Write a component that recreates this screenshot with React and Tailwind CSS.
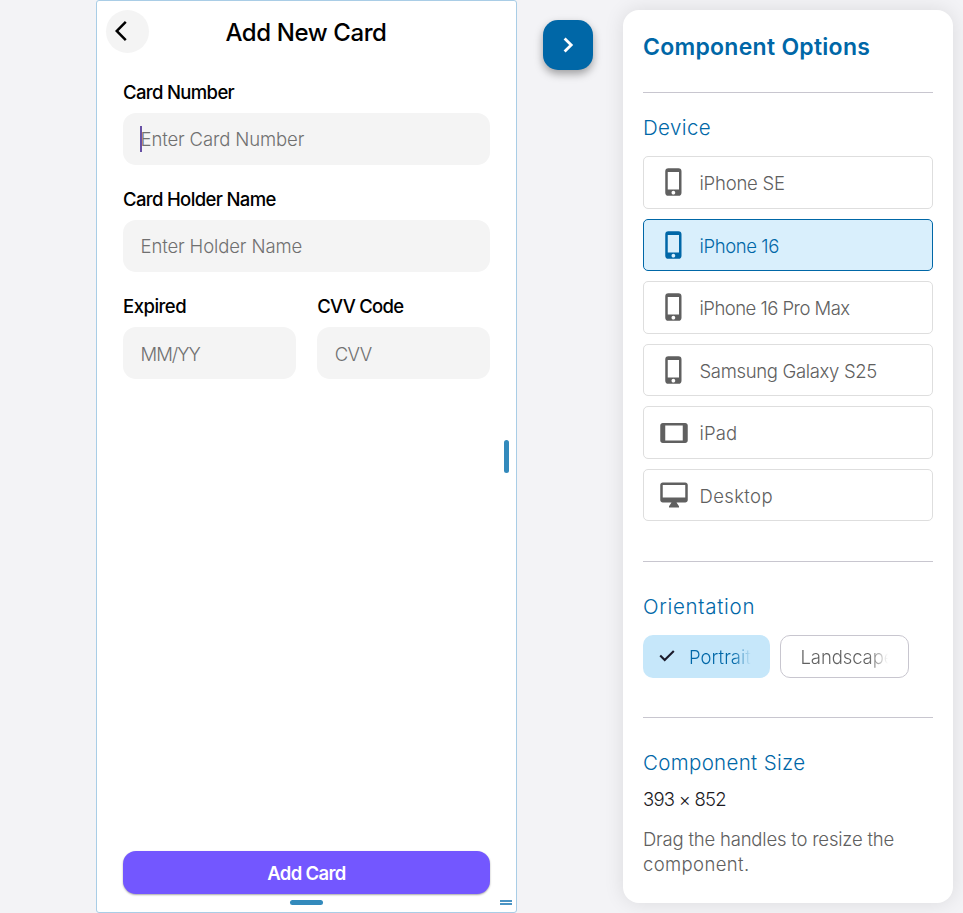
import { MdPhoneIphone, MdTablet } from "react-icons/md";

function DesktopIcon({ className }) {
  return (
    <svg viewBox="0 0 24 24" fill="currentColor" className={className}>
      <path fillRule="evenodd" d="M21 2H3c-1.1 0-2 .9-2 2v12c0 1.1.9 2 2 2h7l-2 3v1h8v-1l-2-3h7c1.1 0 2-.9 2-2V4c0-1.1-.9-2-2-2zm0 12H3V4h18v10z" />
    </svg>
  );
}

const devices = [
  { name: "iPhone SE", icon: MdPhoneIphone, track: "tracking-[-0.22px]" },
  { name: "iPhone 16", icon: MdPhoneIphone, track: "tracking-[-0.4px]", active: true },
  { name: "iPhone 16 Pro Max", icon: MdPhoneIphone, track: "tracking-[-0.52px]" },
  { name: "Samsung Galaxy S25", icon: MdPhoneIphone, track: "tracking-[-0.33px]" },
  { name: "iPad", icon: MdTablet, track: "tracking-[0.1px]" },
  { name: "Desktop", icon: DesktopIcon, track: "tracking-[0.38px]" },
];

function Field({ label, labelTrack, placeholder, track, focused, textTop = "pt-[2px]" }) {
  return (
    <div className="min-w-0 flex-1">
      <div className={`flex h-[42px] items-center pt-0.5 text-[18.5px] font-medium text-black ${labelTrack}`}>{label}</div>
      <div className={`relative flex h-[51.5px] items-center rounded-[13px] bg-[#f4f4f4] pl-[17.5px] text-[18.5px] font-[350] text-[#707070] ${textTop}`}>
        {focused && <span className="absolute top-[13px] left-[17px] h-[26px] w-[2px] bg-[#6750a4]" />}
        <span className={`whitespace-nowrap ${track}`}>{placeholder}</span>
      </div>
    </div>
  );
}

function Phone() {
  return (
    <div className="relative ml-24 flex h-[913px] w-[421px] shrink-0 flex-col rounded-[3px] border border-[#a9cde6] bg-white">
      <div className="flex h-[61px] items-center pl-[9px]">
        <div className="flex size-[43px] shrink-0 items-center rounded-full bg-[#f4f4f4] pb-px pl-[8.5px]">
          <svg viewBox="0 0 12 20" className="h-5 w-3">
            <path d="M11.67 1.77L9.9 0 0 10l9.9 10 1.77-1.77L3.54 10z" fill="#000" />
          </svg>
        </div>
        <h1 className="w-[314px] pt-[2px] text-center text-2xl font-medium tracking-[-0.4px] text-black">Add New Card</h1>
      </div>
      <div className="flex flex-col gap-[13.5px] px-[26px] pt-[9px]">
        <Field label="Card Number" labelTrack="tracking-[-0.65px]" placeholder="Enter Card Number" track="tracking-[-0.12px]" focused />
        <Field label="Card Holder Name" labelTrack="tracking-[-0.65px]" placeholder="Enter Holder Name" track="tracking-[-0.12px]" />
        <div className="flex gap-[21.5px]">
          <Field label="Expired" labelTrack="tracking-[-0.5px]" placeholder="MM/YY" track="tracking-[-1px]" textTop="pt-[4px]" />
          <Field label="CVV Code" labelTrack="tracking-[-0.75px]" placeholder="CVV" track="tracking-[-0.65px]" textTop="pt-[4px]" />
        </div>
      </div>
      <div className="mt-auto px-[26px] pb-[18px]">
        <button className="block h-[43px] w-full rounded-[13px] bg-[#7357ff] pt-[3px] text-[18.5px] font-semibold tracking-[-0.65px] text-white shadow-[0_1px_2px_rgba(0,0,0,0.35)]">Add Card</button>
      </div>
      <span className="absolute top-[439px] left-[407px] h-[33px] w-[5px] rounded-full bg-[#338abc]" />
      <span className="absolute top-[899px] left-[193px] h-[5px] w-[33px] rounded-full bg-[#338abc]" />
      <span className="absolute top-[899px] left-[403px] h-[5px] w-[12px] border-y-2 border-[#4b94c4]" />
    </div>
  );
}

function Heading({ children, className }) {
  return <h3 className={`flex items-center text-[20.5px] font-[350] text-[#0067a7] ${className}`}>{children}</h3>;
}

function Panel() {
  return (
    <aside className="mt-2.5 ml-[30px] h-[893px] w-[330px] shrink-0 rounded-2xl bg-white px-5 shadow-[0_0_20px_rgba(0,0,0,0.1)]">
      <h2 className="flex h-[83px] items-center border-b border-[#c8c6cf] pb-[7px] text-[23px] font-[560] tracking-[0.27px] whitespace-nowrap text-[#0067a7]">Component Options</h2>
      <Heading className="h-[63px] pt-[8px] tracking-[0.38px]">Device</Heading>
      <div className="flex flex-col gap-[10.1px]">
        {devices.map(({ name, icon: Icon, track, active }) => (
          <div key={name} className={`flex h-[52.5px] items-center gap-[10.5px] rounded-[5px] border pl-[15px] text-[18.5px] font-[350] ${active ? "border-[#0067a7] bg-[#d9effc] text-[#0067a7]" : "border-[#dedede] bg-white text-[#606060]"}`}>
            <Icon className="size-[30px] shrink-0" />
            <span className={`${active ? "pt-[4px]" : "pt-[3px]"} ${track}`}>{name}</span>
          </div>
        ))}
      </div>
      <div className="mt-10 h-px bg-[#c8c6cf]" />
      <Heading className="h-[73px] pt-[17px] tracking-[0.7px]">Orientation</Heading>
      <div className="flex gap-2.5 text-[18.5px] font-[350]">
        <div className="flex h-[42.5px] w-[126.5px] items-center rounded-[10px] bg-[#c6e7fa] pl-[14px] text-[#0067a7]">
          <svg viewBox="0 0 20 20" className="mr-[12px] mb-px size-5 shrink-0" fill="none" stroke="#1c1b2b" strokeWidth="2.1">
            <path d="M3.2 9.6l4.5 4.5L16.8 5" />
          </svg>
          <span className="w-[62px] overflow-hidden bg-linear-to-r from-[#0067a7] from-72% to-transparent bg-clip-text pt-[2px] tracking-[0.05px] text-transparent">Portrait</span>
        </div>
        <div className="flex h-[42.5px] w-[129px] items-center rounded-[10px] border-[1.5px] border-[#c8c6cf] pl-5 text-[#606060]">
          <span className="w-[87px] overflow-hidden bg-linear-to-r from-[#606060] from-78% to-transparent bg-clip-text pt-[2px] tracking-[-0.1px] text-transparent">Landscape</span>
        </div>
      </div>
      <div className="mt-[39.5px] h-px bg-[#c8c6cf]" />
      <Heading className="h-[64px] pt-[25px] tracking-[0.33px]">Component Size</Heading>
      <p className="h-[45px] pt-[4px] text-[18.5px] leading-[27px] font-[350] tracking-[-0.75px] text-[#1c1b1f]">393 × 852</p>
      <p className="text-[18.5px] leading-[25px] font-[350] text-[#606060]">
        <span className="block tracking-[-0.2px] whitespace-nowrap">Drag the handles to resize the</span>
        <span className="block tracking-[0.38px]">component.</span>
      </p>
    </aside>
  );
}

export default function App() {
  return (
    <div className="flex h-[913px] w-[963px] overflow-hidden bg-[#f3f3f6] font-['Inter','Open_Sans',sans-serif] antialiased">
      <Phone />
      <button className="mt-5 ml-[26px] flex size-[50px] shrink-0 items-center justify-center rounded-[15px] bg-[#0067a7] text-white shadow-[0_4px_8px_rgba(0,0,0,0.35)]">
        <svg viewBox="0 0 30 30" className="size-[30px]" fill="none" stroke="currentColor" strokeWidth="2.8">
          <path d="M11.6 8.4l6.6 6.6-6.6 6.6" />
        </svg>
      </button>
      <Panel />
    </div>
  );
}
